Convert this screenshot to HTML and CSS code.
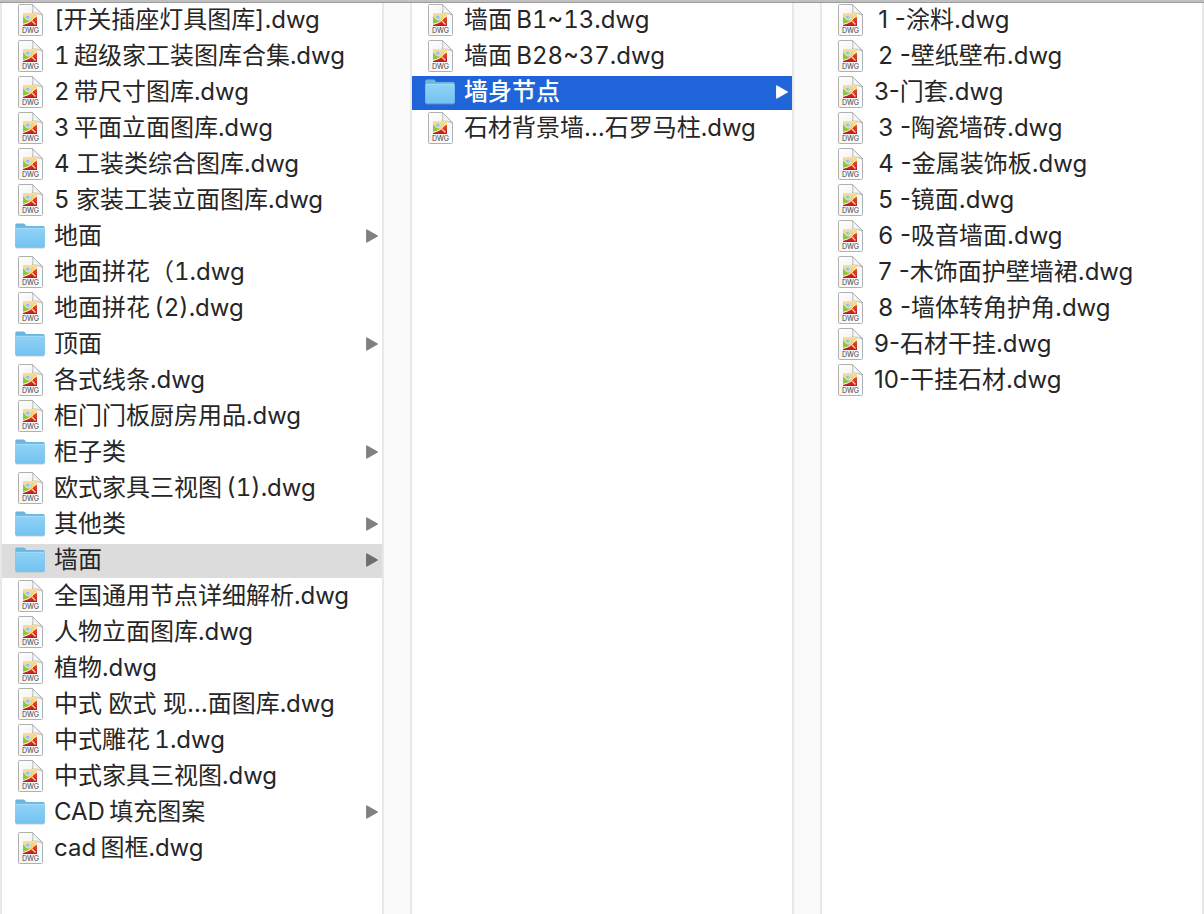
FILE: index.html
```html
<!DOCTYPE html>
<html lang="zh-CN">
<head>
    <meta charset="UTF-8">
    <meta name="viewport" content="width=device-width, initial-scale=1.0">
    <title>墙身节点</title>
    <link rel="stylesheet" href="styles.css">
</head>
<body>
    <!-- shared icons -->
    <svg class="sprite" aria-hidden="true">
        <defs>
            <linearGradient id="page-fill" x1="0" y1="0" x2="1" y2="1">
                <stop offset="0" stop-color="#fff"/>
                <stop offset="0.45" stop-color="#f4f4f4"/>
                <stop offset="1" stop-color="#fff"/>
            </linearGradient>
            <linearGradient id="folder-fill" x1="0" y1="0" x2="0" y2="1">
                <stop offset="0" stop-color="#8fd2f5"/>
                <stop offset="1" stop-color="#74c3f0"/>
            </linearGradient>
            <linearGradient id="yellow-fill" x1="0" y1="0" x2="0" y2="1">
                <stop offset="0" stop-color="#f8df9c"/>
                <stop offset="1" stop-color="#f2c02c"/>
            </linearGradient>
            <linearGradient id="red-fill" x1="0" y1="0" x2="0" y2="1">
                <stop offset="0" stop-color="#e0523c"/>
                <stop offset="1" stop-color="#c3161c"/>
            </linearGradient>
        </defs>
        <symbol id="dwg" viewBox="0 0 25 32">
            <path d="M.5 1.5Q.5.5 1.5.5H14.5L24.5 10.5V30.5Q24.5 31.5 23.5 31.5H1.5Q.5 31.5.5 30.5Z" fill="url(#page-fill)" stroke="#b0b0b0"/>
            <path d="M14.5.5Q15.5 5 14.5 9Q19 8.5 24.5 11Z" fill="#f7f7f7" stroke="#a9a9a9" stroke-width=".8"/>
            <path d="M5 9H17Q19 9 19 11V14Q14 20 5 20Z" fill="url(#yellow-fill)"/>
            <path d="M5 12.500Q7 16 12.500 17Q9 19.500 5 20Z" fill="#8cc63f"/>
            <path d="M5 22V20.800Q13 19 16 14L19 13V22Z" fill="url(#red-fill)"/>
            <path d="M5 20.300Q13 19 17.500 12" fill="none" stroke="#fff" stroke-width=".8"/>
            <path d="M12.500 15.500L17.500 20.500" stroke="#f5d98c" stroke-width="1.300"/>
            <circle cx="10" cy="13.500" r="2.500" fill="#a9cfe2" stroke="#dfeaed" stroke-width=".8"/>
            <path d="M8.500 13.500Q9 12 10.500 12" fill="none" stroke="#6ea4c4" stroke-width=".8"/>
            <text x="12.500" y="29" class="dwg-label">DWG</text>
        </symbol>
        <symbol id="folder" viewBox="0 0 30 26">
            <path d="M.5 24.500Q.5 25.300 1.500 25.300H28.500Q29.500 25.300 29.500 24.500Z" fill="#8fa5b0"/>
            <path d="M.3 2Q.3.500 1.800.500H8.300Q9.300.500 9.900 1.300L11.200 3H28.200Q29.700 3 29.700 4.500V23Q29.700 24.500 28.200 24.500H1.800Q.3 24.500.3 23Z" fill="#69b7e0"/>
            <path d="M.3 6Q.3 5 1.500 5H28.500Q29.700 5 29.700 6V23Q29.700 24.300 28.200 24.300H1.800Q.3 24.300.3 23Z" fill="url(#folder-fill)"/>
            <path d="M1 5.300H29" stroke="#a9dff8" stroke-width=".8"/>
        </symbol>
        <symbol id="arrow" viewBox="0 0 12 14">
            <path d="M.800 1L11.300 7L.800 13Z" fill="currentColor" stroke="currentColor" stroke-width="1.400" stroke-linejoin="round"/>
        </symbol>
    </svg>

    <main class="browser">
        <ul class="column">
            <li><a class="row" href="#"><svg class="icon"><use href="#dwg"/></svg><span class="name">[开关插座灯具图库].dwg</span></a></li>
            <li><a class="row" href="#"><svg class="icon"><use href="#dwg"/></svg><span class="name">1&thinsp;超级家工装图库合集.dwg</span></a></li>
            <li><a class="row" href="#"><svg class="icon"><use href="#dwg"/></svg><span class="name">2&thinsp;带尺寸图库.dwg</span></a></li>
            <li><a class="row" href="#"><svg class="icon"><use href="#dwg"/></svg><span class="name">3&thinsp;平面立面图库.dwg</span></a></li>
            <li><a class="row" href="#"><svg class="icon"><use href="#dwg"/></svg><span class="name">4 工装类综合图库.dwg</span></a></li>
            <li><a class="row" href="#"><svg class="icon"><use href="#dwg"/></svg><span class="name">5 家装工装立面图库.dwg</span></a></li>
            <li><a class="row" href="#"><svg class="icon folder"><use href="#folder"/></svg><span class="name">地面</span><svg class="arrow"><use href="#arrow"/></svg></a></li>
            <li><a class="row" href="#"><svg class="icon"><use href="#dwg"/></svg><span class="name">地面拼花（1.dwg</span></a></li>
            <li><a class="row" href="#"><svg class="icon"><use href="#dwg"/></svg><span class="name">地面拼花&thinsp;(2).dwg</span></a></li>
            <li><a class="row" href="#"><svg class="icon folder"><use href="#folder"/></svg><span class="name">顶面</span><svg class="arrow"><use href="#arrow"/></svg></a></li>
            <li><a class="row" href="#"><svg class="icon"><use href="#dwg"/></svg><span class="name">各式线条.dwg</span></a></li>
            <li><a class="row" href="#"><svg class="icon"><use href="#dwg"/></svg><span class="name">柜门门板厨房用品.dwg</span></a></li>
            <li><a class="row" href="#"><svg class="icon folder"><use href="#folder"/></svg><span class="name">柜子类</span><svg class="arrow"><use href="#arrow"/></svg></a></li>
            <li><a class="row" href="#"><svg class="icon"><use href="#dwg"/></svg><span class="name">欧式家具三视图&thinsp;(1).dwg</span></a></li>
            <li><a class="row" href="#"><svg class="icon folder"><use href="#folder"/></svg><span class="name">其他类</span><svg class="arrow"><use href="#arrow"/></svg></a></li>
            <li><a class="row open" href="#"><svg class="icon folder"><use href="#folder"/></svg><span class="name">墙面</span><svg class="arrow"><use href="#arrow"/></svg></a></li>
            <li><a class="row" href="#"><svg class="icon"><use href="#dwg"/></svg><span class="name">全国通用节点详细解析.dwg</span></a></li>
            <li><a class="row" href="#"><svg class="icon"><use href="#dwg"/></svg><span class="name">人物立面图库.dwg</span></a></li>
            <li><a class="row" href="#"><svg class="icon"><use href="#dwg"/></svg><span class="name">植物.dwg</span></a></li>
            <li><a class="row" href="#"><svg class="icon"><use href="#dwg"/></svg><span class="name">中式 欧式 现…面图库.dwg</span></a></li>
            <li><a class="row" href="#"><svg class="icon"><use href="#dwg"/></svg><span class="name">中式雕花&thinsp;1.dwg</span></a></li>
            <li><a class="row" href="#"><svg class="icon"><use href="#dwg"/></svg><span class="name">中式家具三视图.dwg</span></a></li>
            <li><a class="row" href="#"><svg class="icon folder"><use href="#folder"/></svg><span class="name">CAD&thinsp;填充图案</span><svg class="arrow"><use href="#arrow"/></svg></a></li>
            <li><a class="row" href="#"><svg class="icon"><use href="#dwg"/></svg><span class="name">cad&thinsp;图框.dwg</span></a></li>
        </ul>

        <div class="gutter"></div>

        <ul class="column">
            <li><a class="row" href="#"><svg class="icon"><use href="#dwg"/></svg><span class="name">墙面&thinsp;B1~13.dwg</span></a></li>
            <li><a class="row" href="#"><svg class="icon"><use href="#dwg"/></svg><span class="name">墙面&thinsp;B28~37.dwg</span></a></li>
            <li><a class="row selected" href="#"><svg class="icon folder"><use href="#folder"/></svg><span class="name">墙身节点</span><svg class="arrow"><use href="#arrow"/></svg></a></li>
            <li><a class="row" href="#"><svg class="icon"><use href="#dwg"/></svg><span class="name">石材背景墙…石罗马柱.dwg</span></a></li>
        </ul>

        <div class="gutter"></div>

        <ul class="column numbered">
            <li><a class="row" href="#"><svg class="icon"><use href="#dwg"/></svg><span class="name">&thinsp;1 -涂料.dwg</span></a></li>
            <li><a class="row" href="#"><svg class="icon"><use href="#dwg"/></svg><span class="name">&thinsp;2 -壁纸壁布.dwg</span></a></li>
            <li><a class="row" href="#"><svg class="icon"><use href="#dwg"/></svg><span class="name">3-门套.dwg</span></a></li>
            <li><a class="row" href="#"><svg class="icon"><use href="#dwg"/></svg><span class="name">&thinsp;3 -陶瓷墙砖.dwg</span></a></li>
            <li><a class="row" href="#"><svg class="icon"><use href="#dwg"/></svg><span class="name">&thinsp;4 -金属装饰板.dwg</span></a></li>
            <li><a class="row" href="#"><svg class="icon"><use href="#dwg"/></svg><span class="name">&thinsp;5 -镜面.dwg</span></a></li>
            <li><a class="row" href="#"><svg class="icon"><use href="#dwg"/></svg><span class="name">&thinsp;6 -吸音墙面.dwg</span></a></li>
            <li><a class="row" href="#"><svg class="icon"><use href="#dwg"/></svg><span class="name">&thinsp;7 -木饰面护壁墙裙.dwg</span></a></li>
            <li><a class="row" href="#"><svg class="icon"><use href="#dwg"/></svg><span class="name">&thinsp;8 -墙体转角护角.dwg</span></a></li>
            <li><a class="row" href="#"><svg class="icon"><use href="#dwg"/></svg><span class="name">9-石材干挂.dwg</span></a></li>
            <li><a class="row" href="#"><svg class="icon"><use href="#dwg"/></svg><span class="name">10-干挂石材.dwg</span></a></li>
        </ul>
    </main>
</body>
</html>
```
FILE: styles.css
```css
* {
    box-sizing: border-box;
}

body {
    margin: 0;
    background: #fff;
    color: #262626;
    font-family: Inter, "Noto Sans CJK SC", sans-serif;
    font-size: 24px;
    line-height: 32px;
    font-variant-numeric: tabular-nums;
}

.sprite {
    position: absolute;
    width: 0;
    height: 0;
    visibility: hidden;
}

.browser {
    display: flex;
    min-height: 100vh;
    border: 2px solid #e8e8e8;
    border-top: 0;
    border-bottom: 0;
}

/* window edge above the columns */
.browser::before {
    content: "";
    position: absolute;
    top: 0;
    left: 0;
    right: 0;
    height: 2px;
    background: #c0c0c0;
    border-bottom: 1px solid #9b9b9b;
}

.column {
    flex: 1;
    min-width: 0;
    margin: 0;
    padding: 4px 0 0;
    list-style: none;
    display: flex;
    flex-direction: column;
    gap: 2px;
}

/* tabular figures also widen the hyphen */
.numbered {
    font-variant-numeric: normal;
}

.gutter {
    width: 30px;
    background: #fafafa;
    border: 2px solid #e8e8e8;
    border-top: 0;
    border-bottom: 0;
}

.row {
    display: flex;
    align-items: center;
    height: 34px;
    padding: 0 4px 2px 13px;
    color: inherit;
    text-decoration: none;
}

.icon {
    flex: none;
    width: 25px;
    height: 32px;
    margin: 0 11px 0 3px;
}

.icon.folder {
    width: 30px;
    height: 26px;
    margin: 0 9px 0 0;
}

.dwg-label {
    font-family: Inter, sans-serif;
    font-size: 7px;
    text-anchor: middle;
    fill: #444;
}

.name {
    flex: 1;
    min-width: 0;
    overflow: hidden;
    white-space: nowrap;
    text-overflow: ellipsis;
    text-autospace: no-autospace;
}

.arrow {
    flex: none;
    width: 12px;
    height: 14px;
    color: #808080;
}

.row.open {
    background: #dcdcdc;
}

.row.open .arrow {
    color: #6e6e6e;
}

.row.selected {
    background: #2064da;
    color: #fff;
    font-weight: 500;
}

.row.selected .arrow {
    color: #fff;
}
```
